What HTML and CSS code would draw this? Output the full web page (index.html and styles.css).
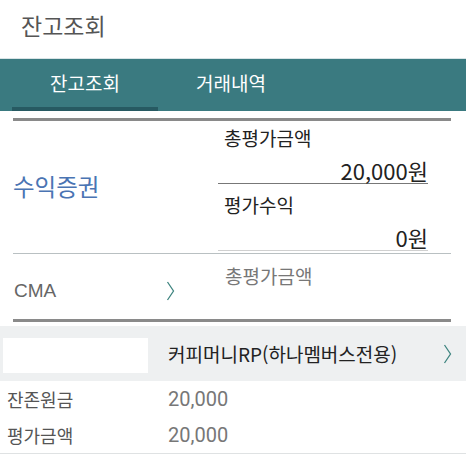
FILE: index.html
```html
<!DOCTYPE html>
<html lang="ko">
<head>
<meta charset="utf-8">
<link rel="stylesheet" href="styles.css">
</head>
<body>
<div class="page">
  <header class="header"><h1 class="title">잔고조회</h1></header>
  <nav class="tabs">
    <div class="tab active">잔고조회</div>
    <div class="tab">거래내역</div>
  </nav>
  <div class="summary">
    <section class="fund">
      <div class="fund-name">수익증권</div>
      <div class="fund-values">
        <div class="label">총평가금액</div>
        <div class="amount line-dark">20,000원</div>
        <div class="label label-second">평가수익</div>
        <div class="amount line-light">0원</div>
      </div>
    </section>
    <section class="cma">
      <div class="cma-left">
        <span class="cma-name">CMA</span>
        <svg class="chev" width="9" height="20" viewBox="0 0 9 20"><polyline points="1.5,1 7.5,10 1.5,19" fill="none" stroke="#3f8580" stroke-width="1.3"/></svg>
      </div>
      <div class="cma-label">총평가금액</div>
    </section>
  </div>
  <div class="product">
    <div class="product-mask"></div>
    <div class="product-name">커피머니RP(하나멤버스전용)</div>
    <svg class="chev" width="9" height="20" viewBox="0 0 9 20"><polyline points="1.5,1 7.5,10 1.5,19" fill="none" stroke="#3f8580" stroke-width="1.3"/></svg>
  </div>
  <div class="rows">
    <div class="row"><span class="row-label">잔존원금</span><span class="row-value">20,000</span></div>
    <div class="row"><span class="row-label">평가금액</span><span class="row-value">20,000</span></div>
  </div>
</div>
</body>
</html>
```
FILE: styles.css
```css
html, body {
  margin: 0;
  padding: 0;
  background: #fff;
}
body {
  font-family: "Noto Sans CJK KR", "Noto Sans", sans-serif;
  width: 466px;
  overflow: hidden;
}
.header {
  height: 59px;
  border-bottom: 1px solid #d9e4e6;
  display: flex;
  align-items: center;
  padding-left: 21px;
  box-sizing: border-box;
}
.title {
  margin: 0;
  font-size: 23px;
  font-weight: 400;
  color: #555;
  margin-top: -8px;
}
.tabs {
  height: 52px;
  background: #3a7a80;
  display: flex;
  padding-left: 12px;
  box-sizing: border-box;
}
.tab {
  width: 146px;
  text-align: center;
  color: #fff;
  font-size: 19px;
  line-height: 48px;
  box-sizing: border-box;
  border-bottom: 4px solid transparent;
}
.tab.active {
  border-bottom-color: #275a62;
}
.summary {
  margin: 7px 15px 0 13px;
  border-top: 3px solid #8a8a8a;
  border-bottom: 3px solid #8a8a8a;
}
.fund {
  display: flex;
  height: 133px;
  border-bottom: 1px solid #b9c0c2;
  box-sizing: border-box;
}
.fund-name {
  width: 205px;
  color: #4a74b3;
  font-size: 23.5px;
  display: flex;
  align-items: center;
  padding-bottom: 2px;
  box-sizing: border-box;
}
.fund-values {
  width: 210px;
  display: flex;
  flex-direction: column;
}
.label {
  font-size: 19px;
  color: #222;
  padding-left: 6px;
  line-height: 26px;
  margin-top: 4px;
}
.label-second {
  margin-top: 8px;
}
.amount {
  font-size: 22px;
  color: #222;
  text-align: right;
  line-height: 26px;
  padding-top: 6px;
}
.line-dark {
  border-bottom: 1px solid #777;
}
.line-light {
  border-bottom: 1px solid #d0d0d0;
}
.cma {
  height: 65px;
  display: flex;
}
.cma-left {
  width: 205px;
  display: flex;
  align-items: center;
  padding-top: 9px;
  box-sizing: border-box;
}
.cma-name {
  font-family: "Liberation Sans", Arial, sans-serif;
  font-size: 19px;
  color: #666;
  width: 152px;
  padding-left: 1px;
}
.cma-label {
  font-size: 19px;
  color: #777;
  padding-left: 7px;
  padding-top: 8px;
}
.product {
  margin-top: 4px;
  height: 55px;
  background: #eef0f1;
  display: flex;
  align-items: center;
}
.product-mask {
  width: 145px;
  height: 35px;
  background: #fff;
  margin-left: 3px;
  margin-top: 3px;
}
.product-name {
  margin-left: 20px;
  font-size: 19px;
  color: #222;
  flex: 1;
}
.product .chev {
  margin-right: 14px;
}
.rows {
  border-bottom: 1px solid #dfe2e3;
}
.row {
  height: 36px;
  display: flex;
  align-items: center;
}
.row-label {
  width: 161px;
  padding-left: 7px;
  font-size: 18px;
  color: #555;
}
.row-value {
  font-family: "Roboto", "Liberation Sans", sans-serif;
  font-size: 20px;
  color: #777;
}
```
